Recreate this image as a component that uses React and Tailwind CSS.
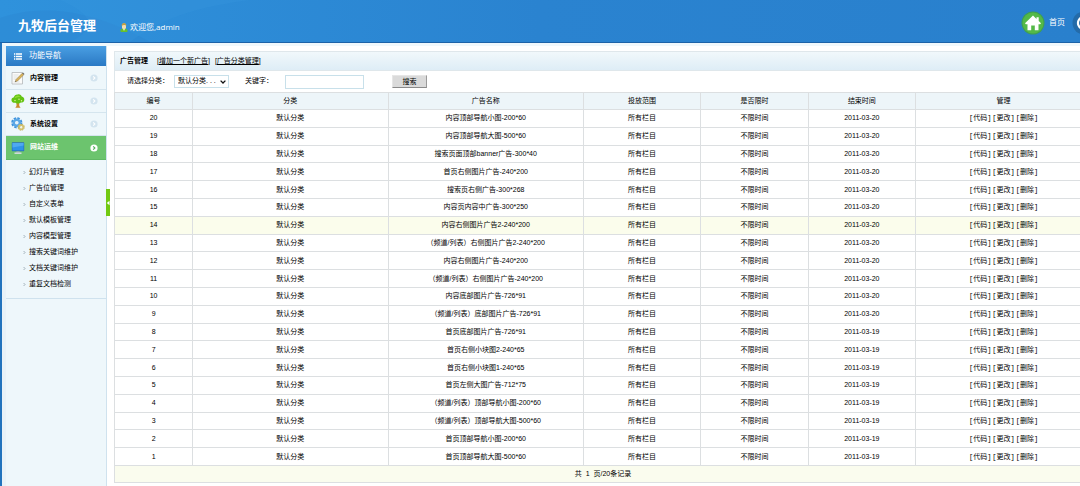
const ads = [
  { id: 20, name: '内容顶部导航小图-200*60', end: '2011-03-20' },
  { id: 19, name: '内容顶部导航大图-500*60', end: '2011-03-20' },
  { id: 18, name: '搜索页面顶部banner广告-300*40', end: '2011-03-20' },
  { id: 17, name: '首页右侧图片广告-240*200', end: '2011-03-20' },
  { id: 16, name: '搜索页右侧广告-300*268', end: '2011-03-20' },
  { id: 15, name: '内容页内容中广告-300*250', end: '2011-03-20' },
  { id: 14, name: '内容右侧图片广告2-240*200', end: '2011-03-20', active: true },
  { id: 13, name: '（频道/列表）右侧图片广告2-240*200', end: '2011-03-20' },
  { id: 12, name: '内容右侧图片广告-240*200', end: '2011-03-20' },
  { id: 11, name: '（频道/列表）右侧图片广告-240*200', end: '2011-03-20' },
  { id: 10, name: '内容底部图片广告-726*91', end: '2011-03-20' },
  { id: 9, name: '（频道/列表）底部图片广告-726*91', end: '2011-03-20' },
  { id: 8, name: '首页底部图片广告-726*91', end: '2011-03-19' },
  { id: 7, name: '首页右侧小块图2-240*65', end: '2011-03-19' },
  { id: 6, name: '首页右侧小块图1-240*65', end: '2011-03-19' },
  { id: 5, name: '首页左侧大图广告-712*75', end: '2011-03-19' },
  { id: 4, name: '（频道/列表）顶部导航小图-200*60', end: '2011-03-19' },
  { id: 3, name: '（频道/列表）顶部导航大图-500*60', end: '2011-03-19' },
  { id: 2, name: '首页顶部导航小图-200*60', end: '2011-03-19' },
  { id: 1, name: '首页顶部导航大图-500*60', end: '2011-03-19' },
]

const columns = [
  { label: '编号', width: 'w-[8%]' },
  { label: '分类', width: 'w-[20%]' },
  { label: '广告名称', width: 'w-[20%]' },
  { label: '投放范围', width: 'w-[12%]' },
  { label: '是否限时', width: 'w-[11%]' },
  { label: '结束时间', width: 'w-[11%]' },
  { label: '管理', width: 'w-[18%]' },
]

const subItems = ['幻灯片管理', '广告位管理', '自定义表单', '默认模板管理', '内容模型管理', '搜索关键词维护', '文档关键词维护', '重复文档检测']

function NoteIcon() {
  return (
    <svg viewBox="0 0 14 14" className="size-[14px]" aria-hidden="true">
      <path d="M1 1.500h10.500v11.500H1z" fill="#fbfbfa" stroke="#b4b8ba" strokeWidth=".8" />
      <path d="M2.500 4h5M2.500 6h4M2.500 8h3M2.500 11h6" stroke="#cfd3d5" strokeWidth=".6" />
      <path d="M5 8.500 11.200 2.300l1.500 1.500L6.500 10l-2.200.7z" fill="#d9b45a" stroke="#8d7544" strokeWidth=".5" />
      <path d="m11.200 2.300.8-.8 1.500 1.500-.8.8z" fill="#6d6a64" />
      <path d="m4.300 10.700.3-1 .7.7z" fill="#333" />
    </svg>
  )
}

function TreeIcon() {
  return (
    <svg viewBox="0 0 14 14" className="size-[14px]" aria-hidden="true">
      <path d="M5.500 8h2.600l.2 4 1.300 1.700H4.300L5.500 12z" fill="#c98a2e" />
      <path d="M6.900.4c2-.4 3.600.9 3.800 2.200 2 .4 3 2.200 2.500 3.800-.4 1.600-2.200 2.500-3.500 2.100-1 1.400-4.100 1.500-5.200.2C2.800 9.200.8 8.400.5 6.500.2 4.800 1.300 3.500 2.900 3.200 3.200 1.500 4.800.2 6.900.4z" fill="#62c312" />
      <path d="M3.500 4.200C4 2.400 5.500 1.500 7 1.600c1 .1 1.800.7 2.200 1.500-2-.6-3.700.6-5.700 1.100z" fill="#8fdb33" />
      <circle cx="4" cy="6.500" r=".7" fill="#e4f0a0" />
      <circle cx="8" cy="5.200" r=".7" fill="#e4f0a0" />
      <circle cx="10.500" cy="6.800" r=".7" fill="#e4f0a0" />
    </svg>
  )
}

function GearsIcon() {
  return (
    <svg viewBox="0 0 14 14" className="size-[14px]" aria-hidden="true">
      <circle cx="5.800" cy="5.800" r="4.400" fill="none" stroke="#3d92dc" strokeWidth="2.400" strokeDasharray="2.300 1.150" />
      <circle cx="5.800" cy="5.800" r="3" fill="none" stroke="#5ba7e6" strokeWidth="2.400" />
      <circle cx="5.800" cy="5.800" r="1.300" fill="#e4f1fa" />
      <circle cx="10.200" cy="10.200" r="2.700" fill="none" stroke="#c9b561" strokeWidth="1.600" strokeDasharray="1.500 .62" />
      <circle cx="10.200" cy="10.200" r="2" fill="none" stroke="#d3c16d" strokeWidth="1.600" />
      <circle cx="10.200" cy="10.200" r=".9" fill="#f5f4e4" />
    </svg>
  )
}

function MonitorIcon() {
  return (
    <svg viewBox="0 0 14 14" className="size-[14px]" aria-hidden="true">
      <rect x=".8" y="1.300" width="12.400" height="8.900" rx=".6" fill="#2a6fb8" />
      <rect x="1.500" y="2" width="11" height="7.400" fill="#2e93e8" />
      <path d="M1.500 2h11v2.500l-11 2z" fill="#4fa9f0" />
      <path d="M5.500 10.200h3l.5 1.500H5z" fill="#9aa9b5" />
      <path d="M3.500 11.500h7v1.400h-7z" fill="#d7dfe4" />
    </svg>
  )
}

function HomeIcon() {
  return (
    <svg viewBox="0 0 24 24" className="size-6" aria-hidden="true">
      <circle cx="12" cy="12" r="11.500" fill="#3f9f52" />
      <circle cx="12" cy="12" r="10.500" fill="#54b948" />
      <path d="M12 4.500 15.500 8V6.200h2.200V10.100l2.300 2.200-.8.9h-1.700v6h-3.700v-4.700h-3.600v4.700H6.500v-6H4.800l-.8-.9z" fill="#fff" />
    </svg>
  )
}

function RefreshIcon() {
  return (
    <svg viewBox="0 0 24 24" className="size-6" aria-hidden="true">
      <circle cx="12" cy="12" r="11.500" fill="#246ba9" />
      <path d="M16.500 8A6 6 0 1 0 18 12" fill="none" stroke="#fff" strokeWidth="2.200" />
      <path d="m18.500 5-.3 5-4.500-1.500z" fill="#fff" />
    </svg>
  )
}

function UserIcon() {
  return (
    <svg viewBox="0 0 8 9" className="h-[9px] w-2" aria-hidden="true">
      <path d="M.6 9V7.300C.6 6 2 5.400 4 5.400s3.400.6 3.400 1.900V9z" fill="#67bf2c" />
      <path d="M3 5.500h2L4 8z" fill="#fff" />
      <rect x="2" y=".5" width="4" height="5.600" rx="1.600" fill="#f3deb0" />
      <path d="M1.700 3C1.500.8 2.800 0 4 0s2.500.8 2.300 3C5.500 1.700 3 1.500 1.700 3z" fill="#c2a043" />
    </svg>
  )
}

function ArrowBadge({ active }) {
  return (
    <svg viewBox="0 0 8 8" className="size-2" aria-hidden="true">
      <circle cx="4" cy="4" r="3.600" fill={active ? '#fff' : '#d3e4ef'} />
      <path d="m3.200 2.300 1.700 1.700-1.700 1.700" fill="none" stroke={active ? '#4fae55' : '#fff'} strokeWidth="1.100" />
    </svg>
  )
}

const menu = [
  { label: '内容管理', Icon: NoteIcon },
  { label: '生成管理', Icon: TreeIcon },
  { label: '系统设置', Icon: GearsIcon },
  { label: '网站运维', Icon: MonitorIcon, active: true },
]

function Header() {
  return (
    <header className="relative flex h-[43px] items-end overflow-hidden border-b border-[#1c62a8] bg-linear-to-r from-[#2f92dc] via-[#2a83d0] to-[#2980cd] text-white">
      <svg viewBox="0 0 260 42" className="absolute top-0 left-0 h-[42px] w-[260px]" aria-hidden="true">
        <path d="M0 42V18C40 4 90 8 150 42z" fill="#2a80cc" opacity=".3" />
        <path d="M60 0h190c-60 8-90 20-120 42H70C100 28 90 12 60 0z" fill="#3a9de2" opacity=".2" />
      </svg>
      <h1 className="relative pb-[6px] pl-[18px] text-[13px] leading-5 font-bold">九牧后台管理</h1>
      <div className="relative ml-6 flex items-center gap-[2px] pb-[9px] text-[8px] leading-3">
        <UserIcon />
        <span className="font-['Open_Sans','Noto_Sans_CJK_SC',sans-serif]">欢迎您,admin</span>
      </div>
      <nav className="relative -mr-4 mb-[7px] ml-auto flex items-center text-[8px]">
        <a href="#home" className="flex items-center gap-1">
          <HomeIcon />
          首页
        </a>
        <a href="#refresh" aria-label="刷新" className="ml-[7px]">
          <RefreshIcon />
        </a>
      </nav>
    </header>
  )
}

function Sidebar() {
  return (
    <aside className="relative w-[101px] shrink-0 border-r border-[#cfe2ee] bg-[#eef7fb]">
      <h2 className="flex h-5 items-center gap-[7px] bg-linear-to-b from-[#4a9fe3] to-[#2a79c4] pl-2 text-[8px] text-white">
        <svg viewBox="0 0 8 7" className="h-[7px] w-2" aria-hidden="true">
          <path d="M0 1h1.300M2 1h6M0 3.500h1.300M2 3.500h6M0 6h1.300M2 6h6" stroke="#fff" strokeWidth="1.300" />
        </svg>
        功能导航
      </h2>
      <ul className="pt-px">
        {menu.map(({ label, Icon, active }) => (
          <li key={label}>
            <a
              href="#menu"
              className={
                active
                  ? 'flex h-6 items-center border-b border-[#5fb863] bg-[#6cc46e] pr-2 pl-[5px] text-[7px] font-bold text-white'
                  : 'flex h-[23px] items-center border-b border-[#d5e5ee] pr-2 pl-[5px] text-[7px] font-bold text-black'
              }
            >
              <Icon />
              <span className="ml-[5px] flex-1">{label}</span>
              <ArrowBadge active={active} />
            </a>
          </li>
        ))}
      </ul>
      <ul className="border-b border-[#cfe2ee] pt-1 pb-[6px]">
        {subItems.map((item) => (
          <li key={item}>
            <a href="#sub" className="flex h-4 items-center gap-[3px] pl-[17px] text-[7px] text-black">
              <svg viewBox="0 0 3 5" className="h-[5px] w-[3px]" aria-hidden="true">
                <path d="m.6 1 1.400 1.500L.6 4" fill="none" stroke="#8fa0aa" strokeWidth=".8" />
              </svg>
              {item}
            </a>
          </li>
        ))}
      </ul>
      <button type="button" aria-label="收起导航" className="absolute top-[143px] -right-[4px] flex h-[27px] w-1 items-center justify-center bg-[#72c912]">
        <svg viewBox="0 0 4 6" className="h-[6px] w-1" aria-hidden="true">
          <path d="M3.500.8v4.400L.8 3z" fill="#fff" />
        </svg>
      </button>
    </aside>
  )
}

function AdTable() {
  return (
    <table className="h-[391px] w-full table-fixed border-collapse text-center leading-4">
      <thead>
        <tr className="bg-[#edf5f9]">
          {columns.map((col) => (
            <th key={col.label} className={`${col.width} border border-[#dcdfe1] p-0 font-normal`}>{col.label}</th>
          ))}
        </tr>
      </thead>
      <tbody>
        {ads.map((ad) => (
          <tr key={ad.id} className={ad.active ? 'bg-[#fbfdec]' : 'bg-white'}>
            <td className="border border-[#dcdfe1] p-0">{ad.id}</td>
            <td className="border border-[#dcdfe1] p-0">默认分类</td>
            <td className="border border-[#dcdfe1] p-0">{ad.name}</td>
            <td className="border border-[#dcdfe1] p-0">所有栏目</td>
            <td className="border border-[#dcdfe1] p-0">不限时间</td>
            <td className="border border-[#dcdfe1] p-0">{ad.end}</td>
            <td className="border border-[#dcdfe1] p-0">
              <div className="flex justify-center gap-px font-['Liberation_Mono','Noto_Sans_CJK_SC',monospace]">
                <span>[<a href="#code">代码</a>]</span>
                <span>[<a href="#edit">更改</a>]</span>
                <span>[<a href="#delete">删除</a>]</span>
              </div>
            </td>
          </tr>
        ))}
      </tbody>
      <tfoot>
        <tr className="bg-[#fafcee]">
          <td colSpan={7} className="border border-[#dcdfe1] p-0">共&nbsp; 1 &nbsp;页/20条记录</td>
        </tr>
      </tfoot>
    </table>
  )
}

export default function App() {
  return (
    <div className="flex min-h-screen flex-col overflow-hidden bg-white font-['Liberation_Sans','Noto_Sans_CJK_SC',sans-serif] text-[7px] text-black">
      <Header />
      <div className="flex flex-1 border-l-2 border-[#2273bd]">
        <div className="flex min-w-0 flex-1 border-t-[3px] border-l-4 border-t-[#f0f8fc] border-l-[#e8f2f8]">
          <Sidebar />
          <main className="-mr-3 ml-[7px] min-w-0 flex-1 pt-[5px]">
            <div className="flex h-5 items-center gap-[5px] border border-[#dfe7eb] bg-linear-to-b from-[#f1f8fb] to-[#deedf6] pl-[5px]">
              <h2 className="mr-1 font-bold">广告管理</h2>
              <span>[<a href="#add" className="underline">增加一个新广告</a>]</span>
              <span>[<a href="#category" className="underline">广告分类管理</a>]</span>
            </div>
            <form className="flex h-[21px] items-center border-l border-[#dfe7eb] pl-3" onSubmit={(e) => e.preventDefault()}>
              <label htmlFor="category">请选择分类：</label>
              <div className="relative ml-[5px]">
                <select id="category" className="block h-[13px] w-[55px] appearance-none border border-[#c8e0ea] bg-white pl-[3px] text-[7px]">
                  <option>默认分类. . .</option>
                </select>
                <svg viewBox="0 0 6 4" className="pointer-events-none absolute top-[5px] right-[3px] h-1 w-[6px]" aria-hidden="true">
                  <path d="m.6.6 2.400 2.400L5.400.6" fill="none" stroke="#111" strokeWidth="1.300" />
                </svg>
              </div>
              <label htmlFor="keyword" className="ml-4">关键字：</label>
              <input id="keyword" type="text" className="ml-3 h-[14px] w-[79px] border border-[#c8e0ea] bg-white px-1" />
              <button type="submit" className="ml-7 h-[13px] w-[35px] border border-t-[#e6e6e6] border-r-[#9a9a9a] border-b-[#8a8a8a] border-l-[#e6e6e6] bg-[#dadada] leading-[10px]">搜索</button>
            </form>
            <AdTable />
          </main>
        </div>
      </div>
    </div>
  )
}
